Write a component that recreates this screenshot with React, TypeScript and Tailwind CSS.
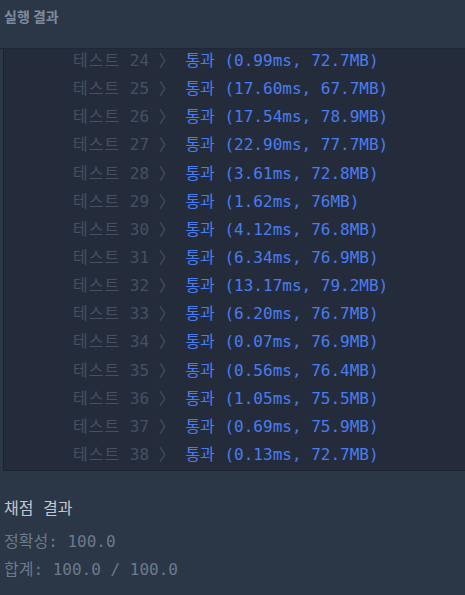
const rows = [
  { n: 24, ms: "0.99ms", mb: "72.7MB" },
  { n: 25, ms: "17.60ms", mb: "67.7MB" },
  { n: 26, ms: "17.54ms", mb: "78.9MB" },
  { n: 27, ms: "22.90ms", mb: "77.7MB" },
  { n: 28, ms: "3.61ms", mb: "72.8MB" },
  { n: 29, ms: "1.62ms", mb: "76MB" },
  { n: 30, ms: "4.12ms", mb: "76.8MB" },
  { n: 31, ms: "6.34ms", mb: "76.9MB" },
  { n: 32, ms: "13.17ms", mb: "79.2MB" },
  { n: 33, ms: "6.20ms", mb: "76.7MB" },
  { n: 34, ms: "0.07ms", mb: "76.9MB" },
  { n: 35, ms: "0.56ms", mb: "76.4MB" },
  { n: 36, ms: "1.05ms", mb: "75.5MB" },
  { n: 37, ms: "0.69ms", mb: "75.9MB" },
  { n: 38, ms: "0.13ms", mb: "72.7MB" },
]

const mono = "font-['DejaVu_Sans_Mono','Noto_Sans_CJK_KR',monospace]"

export default function App() {
  return (
    <div className="w-[465px] h-[595px] bg-[#2b3646] overflow-hidden">
      {/* header */}
      <div className="h-[49px] border-b border-[#1f2836] pl-[4px] pt-[5px]">
        <h2 className="text-[14px] leading-[22px] font-bold text-[#7f8b9b] font-['Noto_Sans_CJK_KR',sans-serif]">
          실행 결과
        </h2>
      </div>

      {/* terminal */}
      <div className="ml-[3px] h-[422px] border-l border-b border-[#1c2330] bg-[#242c3b] overflow-hidden flex flex-col justify-end pb-[1px]">
        {rows.map((r) => (
          <div key={r.n} className={`h-[28.15px] shrink-0 flex items-center pl-[69px] text-[16px] whitespace-pre ${mono}`}>
            <span className="text-[#455063]">
              <span className="tracking-[1px]">테스트</span> {r.n} <span className="tracking-[1px]">〉</span>{" "}
            </span>
            <span className="text-[#4a7cef]">통과 ({r.ms}, {r.mb})</span>
          </div>
        ))}
      </div>

      {/* score */}
      <div className={`pl-[4px] pt-[24px] whitespace-pre text-[16px] ${mono}`}>
        <div className="h-[28px] flex items-center text-[#c3c8d0]">채점 결과</div>
        <div className="mt-[5px] h-[28px] flex items-center text-[#6c7a8d]">정확성: 100.0</div>
        <div className="h-[28px] flex items-center text-[#6c7a8d]">합계: 100.0 / 100.0</div>
      </div>
    </div>
  )
}
